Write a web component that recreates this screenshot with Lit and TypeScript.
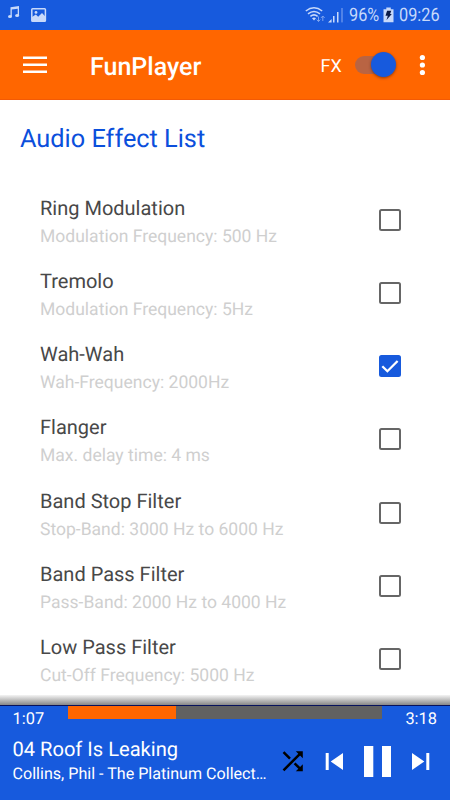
import { LitElement, html, css, svg } from "lit";
import { customElement, property, state } from "lit/decorators.js";
import { classMap } from "lit/directives/class-map.js";

interface Effect {
  name: string;
  detail: string;
  on: boolean;
}

@customElement("status-bar")
class StatusBar extends LitElement {
  static styles = css`
    :host {
      display: flex;
      height: 30px;
      box-sizing: border-box;
      background: #175add;
      color: #c8d9fa;
      justify-content: space-between;
    }
    svg {
      display: block;
    }
    .right {
      display: flex;
      height: 30px;
      align-items: center;
      padding-right: 10px;
    }
    .label {
      font-size: 18.5px;
      line-height: 30px;
      white-space: nowrap;
      transform: scaleX(0.88);
      transform-origin: 0 50%;
    }
    .percent {
      width: 34px;
    }
    .clock {
      width: 41px;
      margin-left: 5px;
    }
  `;
  render() {
    return html`
      <svg width="60" height="30" viewBox="0 0 60 30">
        <g fill="#c8d9fa">
          <path d="M10.5 7.2 L19 6 V15.2 H17.7 V8.8 L11.8 9.6 V16.5 H10.5 Z" />
          <ellipse cx="10" cy="16.6" rx="2" ry="1.5" />
          <ellipse cx="17.1" cy="15.4" rx="2" ry="1.5" />
        </g>
        <rect x="31.8" y="8.8" width="13.6" height="12.4" rx=".8" fill="none" stroke="#c8d9fa" stroke-width="1.5" />
        <path d="M32 19.5 V17 L35.8 14.5 L38.2 16.8 L42 13 L45.5 16.7 V21 H32 Z" fill="#c8d9fa" />
        <circle cx="36" cy="12.4" r="1.4" fill="#c8d9fa" />
      </svg>
      <div class="right">
        <svg width="44" height="30" viewBox="305 0 44 30">
          <g fill="none" stroke="#c8d9fa" stroke-width="1.5">
            <path d="M305.8 11 Q314 4.6 322.2 11" />
            <path d="M308 13.8 Q314 9 320 13.8" />
            <path d="M310.4 16.4 Q314 13.4 317.6 16.4" />
          </g>
          <path d="M312 18.2 Q314 16.6 316 18.2 L314 20.4 Z" fill="#c8d9fa" />
          <g stroke="#7fa4ee" stroke-width="1" fill="none">
            <path d="M318.5 16.5 V21.5 M316.7 19.6 L318.5 21.5 L320.3 19.6" />
            <path d="M322.8 21 V16 M321 17.9 L322.8 16 L324.6 17.9" />
          </g>
          <path d="M328 22.4 L331.6 19 V22.4 Z M333 16 H334.5 V22.4 H333 Z M337 12 H338.5 V22.4 H337 Z" fill="#c8d9fa" />
          <rect x="341.2" y="8" width="1.6" height="14.4" fill="#5f8de9" />
        </svg>
        <span class="label percent">96%</span>
        <svg width="11" height="30" viewBox="382.7 0 11 30">
          <path d="M383.2 9.2 H386 V7.6 H390.5 V9.2 H393.2 V22.3 H383.2 Z" fill="#c8d9fa" />
          <path d="M386.8 10.8 H391 L389.8 14 H391.5 L386.2 20 L387.5 15.8 H385.2 Z" fill="#0c1c48" />
        </svg>
        <span class="label clock">09:26</span>
      </div>
    `;
  }
}

@customElement("app-bar")
class AppBar extends LitElement {
  static styles = css`
    :host {
      display: flex;
      height: 70px;
      box-sizing: border-box;
      align-items: center;
      background: #ff6600;
      border-bottom: 1px solid #f35a05;
      color: #fff;
      padding-left: 23px;
    }
    svg {
      display: block;
      flex: none;
    }
    .title {
      flex: 1;
      margin-left: 43px;
      padding-top: 6px;
      font-size: 25px;
      font-weight: 500;
      line-height: 30px;
    }
    .fx {
      font-size: 18px;
      line-height: 24px;
      width: 22px;
      margin-right: 12px;
      padding-top: 4px;
    }
    .toggle {
      display: flex;
      width: 41px;
      height: 18px;
      border-radius: 9px;
      align-items: center;
      justify-content: flex-end;
      background: linear-gradient(to right, #b96443 34px, transparent 34px);
    }
    .knob {
      width: 25px;
      height: 25px;
      border-radius: 50%;
      background: #175add;
      box-shadow: 0 1px 3px rgba(70, 30, 20, 0.6);
    }
    .more {
      margin-left: 23.5px;
    }
  `;
  render() {
    return html`
      <svg width="24" height="18" viewBox="0 0 24 18" fill="#fff">
        <path d="M0 .5h24v2.6H0zM0 7.5h24v2.6H0zM0 14.5h24v2.6H0z" />
      </svg>
      <div class="title">FunPlayer</div>
      <div class="fx">FX</div>
      <div class="toggle"><div class="knob"></div></div>
      <svg class="more" width="31" height="22" viewBox="0 0 31 22" fill="#fff">
        <circle cx="3.4" cy="3.5" r="2.6" />
        <circle cx="3.4" cy="11" r="2.6" />
        <circle cx="3.4" cy="18.5" r="2.6" />
      </svg>
    `;
  }
}

@customElement("effect-row")
class EffectRow extends LitElement {
  @property({ attribute: false }) effect!: Effect;
  static styles = css`
    :host {
      display: flex;
      height: 73.15px;
      align-items: flex-start;
      justify-content: space-between;
      padding: 0 49px 0 40px;
    }
    .name {
      font-size: 20px;
      line-height: 28px;
      color: #484848;
    }
    .detail {
      font-size: 17.55px;
      line-height: 30px;
      color: #cfcfcf;
    }
    .box {
      box-sizing: border-box;
      width: 22px;
      height: 22px;
      margin-top: 15px;
      border: 2px solid #666;
      border-radius: 2.5px;
    }
    .box.on {
      background: #175add;
      border-color: #175add;
    }
    svg {
      display: block;
    }
  `;
  render() {
    const { name, detail, on } = this.effect;
    return html`
      <div>
        <div class="name">${name}</div>
        <div class="detail">${detail}</div>
      </div>
      <div class=${classMap({ box: true, on })}>
        ${on
          ? html`<svg width="18" height="18" viewBox="0 0 18 18">
              <path d="M1.3 9.2 L6.4 14.2 L16.6 4" fill="none" stroke="#fff" stroke-width="2.3" />
            </svg>`
          : ""}
      </div>
    `;
  }
}

@customElement("player-bar")
class PlayerBar extends LitElement {
  @property({ type: Number }) progress = 34.4;
  static styles = css`
    :host {
      display: block;
      height: 95px;
      color: #fff;
      background: #175add;
      border-top: 1px solid #07125c;
      box-sizing: border-box;
    }
    .seek {
      display: flex;
      height: 25px;
      align-items: flex-start;
      justify-content: space-between;
      padding: 0 13px 0 12.5px;
      font-size: 16.4px;
      line-height: 27px;
    }
    .time {
      width: 55.5px;
    }
    .total {
      width: 55px;
      text-align: right;
    }
    .track {
      flex: 1;
      height: 13px;
      background: #616161;
    }
    .fill {
      height: 100%;
      background: #ff6600;
    }
    .controls {
      display: flex;
    }
    .info {
      width: 254.5px;
      padding: 4px 0 0 12.5px;
    }
    .song {
      font-size: 20.1px;
      line-height: 28px;
    }
    .album {
      font-size: 16.1px;
      line-height: 22px;
      white-space: nowrap;
    }
    svg {
      display: block;
    }
  `;
  render() {
    return html`
      <div class="seek">
        <span class="time">1:07</span>
        <div class="track"><div class="fill" style="width:${this.progress}%"></div></div>
        <span class="time total">3:18</span>
      </div>
      <div class="controls">
        <div class="info">
          <div class="song">04 Roof Is Leaking</div>
          <div class="album">Collins, Phil - The Platinum Collect…</div>
        </div>
        <svg width="183" height="60" viewBox="267 731 183 60">
          ${svg`
          <path d="M283.5 752.2 L290 758.7 M283.5 770.3 L301 752.8 M294.6 763.3 L301 769.7" fill="none" stroke="#000" stroke-width="2.5" />
          <path d="M295.8 751.2 H302.8 V758.2 Z M302.8 764.3 V771.3 H295.8 Z" fill="#000" />
          <g fill="#fff">
            <path d="M325.7 753 H328.7 V770 H325.7 Z M343 753 V770 L330.7 761.5 Z" />
            <path d="M364 746 H373.3 V777 H364 Z M382 746 H391 V777 H382 Z" />
            <path d="M412 753 L424.3 761.5 L412 770 Z M426.3 753 H429.3 V770 H426.3 Z" />
          </g>`}
        </svg>
      </div>
    `;
  }
}

@customElement("app-root")
class AppRoot extends LitElement {
  @state() private effects: Effect[] = [
    { name: "Ring Modulation", detail: "Modulation Frequency: 500 Hz", on: false },
    { name: "Tremolo", detail: "Modulation Frequency: 5Hz", on: false },
    { name: "Wah-Wah", detail: "Wah-Frequency: 2000Hz", on: true },
    { name: "Flanger", detail: "Max. delay time: 4 ms", on: false },
    { name: "Band Stop Filter", detail: "Stop-Band: 3000 Hz to 6000 Hz", on: false },
    { name: "Band Pass Filter", detail: "Pass-Band: 2000 Hz to 4000 Hz", on: false },
    { name: "Low Pass Filter", detail: "Cut-Off Frequency: 5000 Hz", on: false },
  ];
  static styles = css`
    :host {
      display: flex;
      flex-direction: column;
      width: 450px;
      height: 800px;
      overflow: hidden;
      background: #fff;
      font-family: Roboto, "Liberation Sans", sans-serif;
      text-rendering: geometricPrecision;
    }
    .list {
      flex: 1;
      min-height: 0;
      overflow: hidden;
    }
    .heading {
      margin: 0;
      padding: 25px 0 0 20px;
      height: 69px;
      font-size: 25.3px;
      font-weight: 400;
      line-height: 30px;
      color: #0b4fdc;
    }
    .shade {
      height: 10px;
      background: linear-gradient(#f4f4f4, #c8c8c8 40%, #878787);
    }
  `;
  render() {
    return html`
      <status-bar></status-bar>
      <app-bar></app-bar>
      <div class="list">
        <h1 class="heading">Audio Effect List</h1>
        ${this.effects.map((e) => html`<effect-row .effect=${e}></effect-row>`)}
      </div>
      <div class="shade"></div>
      <player-bar></player-bar>
    `;
  }
}
